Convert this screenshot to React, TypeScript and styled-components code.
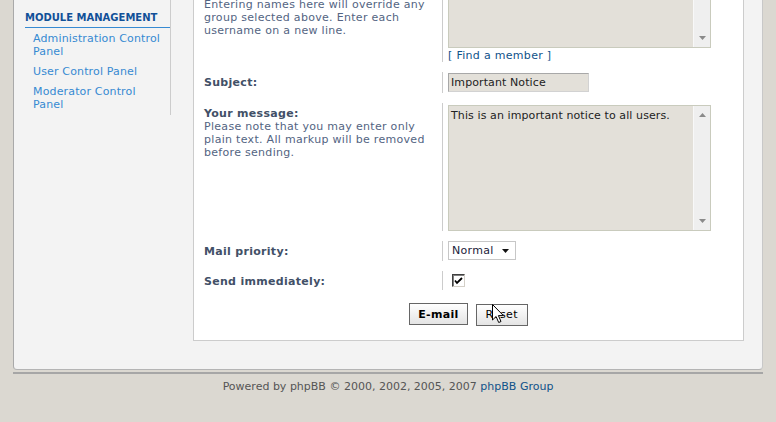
import React from 'react';
import styled, { createGlobalStyle } from 'styled-components';

const GlobalStyle = createGlobalStyle`
  html, body {
    margin: 0;
    padding: 0;
  }
  body {
    background: #dbd8d1;
    font-family: "DejaVu Sans", Verdana, sans-serif;
    overflow: hidden;
  }
`;

const MENU = ['Administration Control Panel', 'User Control Panel', 'Moderator Control Panel'];

export default function App() {
  return (
    <>
      <GlobalStyle />
      <Page>
        <Panel>
          <Menu>
            <MenuTitle>Module management</MenuTitle>
            <MenuList>
              {MENU.map((item) => (
                <MenuItem key={item}>
                  <a href="#">{item}</a>
                </MenuItem>
              ))}
            </MenuList>
          </Menu>
          <Main>
            <Fieldset>
              <Row>
                <Dt>
                  <Label>Send to users:</Label>
                  <Explain>
                    Entering names here will override any group selected above. Enter each username on a new line.
                  </Explain>
                </Dt>
                <Dd>
                  <ScrollBox $height={65}>
                    <Area defaultValue="" />
                    <Track>
                      <span />
                      <Arrow viewBox="0 0 7 4">
                        <path d="M0 0h7L3.5 4z" />
                      </Arrow>
                    </Track>
                  </ScrollBox>
                  <FindLink href="#">[ Find a member ]</FindLink>
                </Dd>
              </Row>
              <Row>
                <Dt>
                  <Label>Subject:</Label>
                </Dt>
                <Dd>
                  <TextInput defaultValue="Important Notice" />
                </Dd>
              </Row>
              <Row>
                <Dt>
                  <Label>Your message:</Label>
                  <Explain>
                    Please note that you may enter only plain text. All markup will be removed before sending.
                  </Explain>
                </Dt>
                <Dd>
                  <ScrollBox $height={126}>
                    <Area defaultValue="This is an important notice to all users." />
                    <Track>
                      <Arrow viewBox="0 0 7 4">
                        <path d="M0 4h7L3.5 0z" />
                      </Arrow>
                      <Arrow viewBox="0 0 7 4">
                        <path d="M0 0h7L3.5 4z" />
                      </Arrow>
                    </Track>
                  </ScrollBox>
                </Dd>
              </Row>
              <Row>
                <Dt>
                  <Label>Mail priority:</Label>
                </Dt>
                <Dd>
                  <SelectWrap>
                    <Select defaultValue="normal">
                      <option value="low">Low</option>
                      <option value="normal">Normal</option>
                      <option value="high">High</option>
                    </Select>
                    <Caret viewBox="0 0 7 4">
                      <path d="M0 0h7L3.5 4z" />
                    </Caret>
                  </SelectWrap>
                </Dd>
              </Row>
              <Row>
                <Dt>
                  <Label>Send immediately:</Label>
                </Dt>
                <Dd>
                  <CheckWrap>
                    <CheckBox type="checkbox" defaultChecked />
                    <Tick viewBox="0 0 9 8">
                      <path d="M1 3.5l2 2.5L8 1" />
                    </Tick>
                  </CheckWrap>
                </Dd>
              </Row>
            </Fieldset>
            <Submit>
              <Button $bold type="button">E-mail</Button>
              <ButtonWrap>
                <Button type="button">Reset</Button>
                <Cursor viewBox="0 0 12 19">
                  <path d="M0.5 0.5v15.5l3.6-3.5 2.6 6 2.3-1-2.6-5.9h5z" />
                </Cursor>
              </ButtonWrap>
            </Submit>
          </Main>
        </Panel>
        <PanelFoot />
        <Footer>
          Powered by phpBB © 2000, 2002, 2005, 2007 <a href="#">phpBB Group</a>
        </Footer>
      </Page>
    </>
  );
}

const Page = styled.div`
  margin-top: -40px;
  padding: 0 13px;
`;

const Panel = styled.div`
  display: flex;
  align-items: flex-start;
  gap: 22px;
  background: #f3f3f3;
  border-left: 1px solid #a9a9a9;
  border-right: 1px solid #c8c8c8;
  border-bottom: 1px solid #b4b4b4;
  border-radius: 0 0 4px 4px;
  padding: 0 18px 28px 0;
`;

const PanelFoot = styled.div`
  margin-top: 2px;
  border-top: 2px solid #a6a6a6;
`;

const Menu = styled.div`
  width: 145px;
  flex-shrink: 0;
  padding: 51px 0 0 11px;
  border-right: 1px solid #cccccc;
`;

const MenuTitle = styled.div`
  font-size: 10px;
  line-height: 13px;
  font-weight: bold;
  text-transform: uppercase;
  color: #115098;
  padding-bottom: 3px;
  border-bottom: 1px solid #368ad2;
`;

const MenuList = styled.ul`
  list-style: none;
  margin: 1px 0 0;
  padding: 0 0 0 8px;
`;

const MenuItem = styled.li`
  font-size: 11px;
  line-height: 13px;
  letter-spacing: 0.15px;
  padding: 3px 4px 4px 0;

  a {
    color: #368ad2;
    text-decoration: none;
  }
`;

const Main = styled.div`
  flex: 1;
  margin-top: 10px;
  background: #ffffff;
  border: 1px solid #cccccc;
  padding: 10px 10px 14px 10px;
`;

const Fieldset = styled.div`
  display: flex;
  flex-direction: column;
  gap: 10px;
`;

const Row = styled.div`
  display: grid;
  grid-template-columns: 238px 1fr;
`;

const Dt = styled.div`
  padding-top: 4px;
  font-size: 11px;
  line-height: 13px;
  letter-spacing: 0.3px;
`;

const Label = styled.div`
  font-weight: bold;
  color: #425067;
`;

const Explain = styled.div`
  color: #536482;
`;

const Dd = styled.div`
  border-left: 1px solid #cccccc;
  padding-left: 5px;
  font-size: 11px;
  line-height: 13px;
  letter-spacing: 0.3px;
`;

const ScrollBox = styled.div<{ $height: number }>`
  box-sizing: border-box;
  display: flex;
  width: 263px;
  height: ${(p) => p.$height}px;
  margin-top: 2px;
  background: #e3e0d9;
  border: 1px solid #c9cbbd;
`;

const Area = styled.textarea`
  flex: 1;
  resize: none;
  overflow: hidden;
  border: none;
  outline: none;
  background: transparent;
  padding: 3px 2px;
  margin: 0;
  font-family: "DejaVu Sans", Verdana, sans-serif;
  font-size: 11px;
  line-height: 13px;
  letter-spacing: 0.1px;
  color: #222222;
`;

const Track = styled.div`
  width: 16px;
  display: flex;
  flex-direction: column;
  justify-content: space-between;
  align-items: center;
  padding: 7px 0;
  background: #efefef;
  border-left: 1px solid #f8f8f8;
`;

const Arrow = styled.svg`
  width: 7px;
  height: 4px;
  fill: #8a8a8a;
`;

const FindLink = styled.a`
  display: block;
  height: 13px;
  padding-top: 1px;
  color: #105289;
  text-decoration: none;
`;

const TextInput = styled.input`
  display: block;
  box-sizing: border-box;
  width: 141px;
  height: 19px;
  margin: 1px 0;
  padding: 0 2px;
  background: #e3e0d9;
  border: 1px solid;
  border-color: #a8a8a8 #d2d2d2 #d2d2d2 #a8a8a8;
  font-family: "DejaVu Sans", Verdana, sans-serif;
  font-size: 11px;
  letter-spacing: 0.1px;
  color: #222222;
  outline: none;
`;

const SelectWrap = styled.div`
  position: relative;
  width: 68px;
  height: 19px;
  margin-bottom: 1px;
`;

const Select = styled.select`
  appearance: none;
  box-sizing: border-box;
  width: 100%;
  height: 100%;
  margin: 0;
  padding: 0 0 0 3px;
  background: #ffffff;
  border: 1px solid #c7c7c7;
  border-radius: 0;
  font-family: "DejaVu Sans", Verdana, sans-serif;
  font-size: 11px;
  letter-spacing: 0.3px;
  color: #1b1b3a;
  outline: none;
`;

const Caret = styled.svg`
  position: absolute;
  right: 7px;
  top: 8px;
  width: 7px;
  height: 4px;
  fill: #111111;
  pointer-events: none;
`;

const CheckWrap = styled.div`
  position: relative;
  width: 13px;
  height: 13px;
  margin: 3px 0 3px 4px;
`;

const CheckBox = styled.input`
  appearance: none;
  box-sizing: border-box;
  display: block;
  width: 13px;
  height: 13px;
  margin: 0;
  background: #ffffff;
  border: 1px solid;
  border-color: #404040 #d4d0c8 #d4d0c8 #404040;
  box-shadow: inset 1px 1px 0 #808080;
`;

const Tick = styled.svg`
  position: absolute;
  left: 2px;
  top: 3px;
  width: 9px;
  height: 8px;
  fill: none;
  stroke: #000000;
  stroke-width: 1.8;
  pointer-events: none;
`;

const Submit = styled.div`
  display: flex;
  justify-content: center;
  gap: 8px;
  padding-top: 13px;
`;

const ButtonWrap = styled.div`
  position: relative;
`;

const Button = styled.button<{ $bold?: boolean }>`
  height: 22px;
  padding: 0 ${(p) => (p.$bold ? 8 : 9)}px;
  margin: 0;
  background: linear-gradient(#ffffff, #e4e4e4);
  border: 1px solid #666666;
  border-radius: 0;
  font-family: "DejaVu Sans", Verdana, sans-serif;
  font-size: 11px;
  letter-spacing: 0.3px;
  font-weight: ${(p) => (p.$bold ? 'bold' : 'normal')};
  color: #000000;
`;

const Cursor = styled.svg`
  position: absolute;
  left: 16px;
  top: 1px;
  width: 12px;
  height: 19px;
  fill: #ffffff;
  stroke: #000000;
  stroke-width: 1;
  pointer-events: none;
`;

const Footer = styled.div`
  padding-top: 6px;
  text-align: center;
  font-size: 11px;
  line-height: 13px;
  color: #555555;

  a {
    color: #105289;
    text-decoration: none;
  }
`;
